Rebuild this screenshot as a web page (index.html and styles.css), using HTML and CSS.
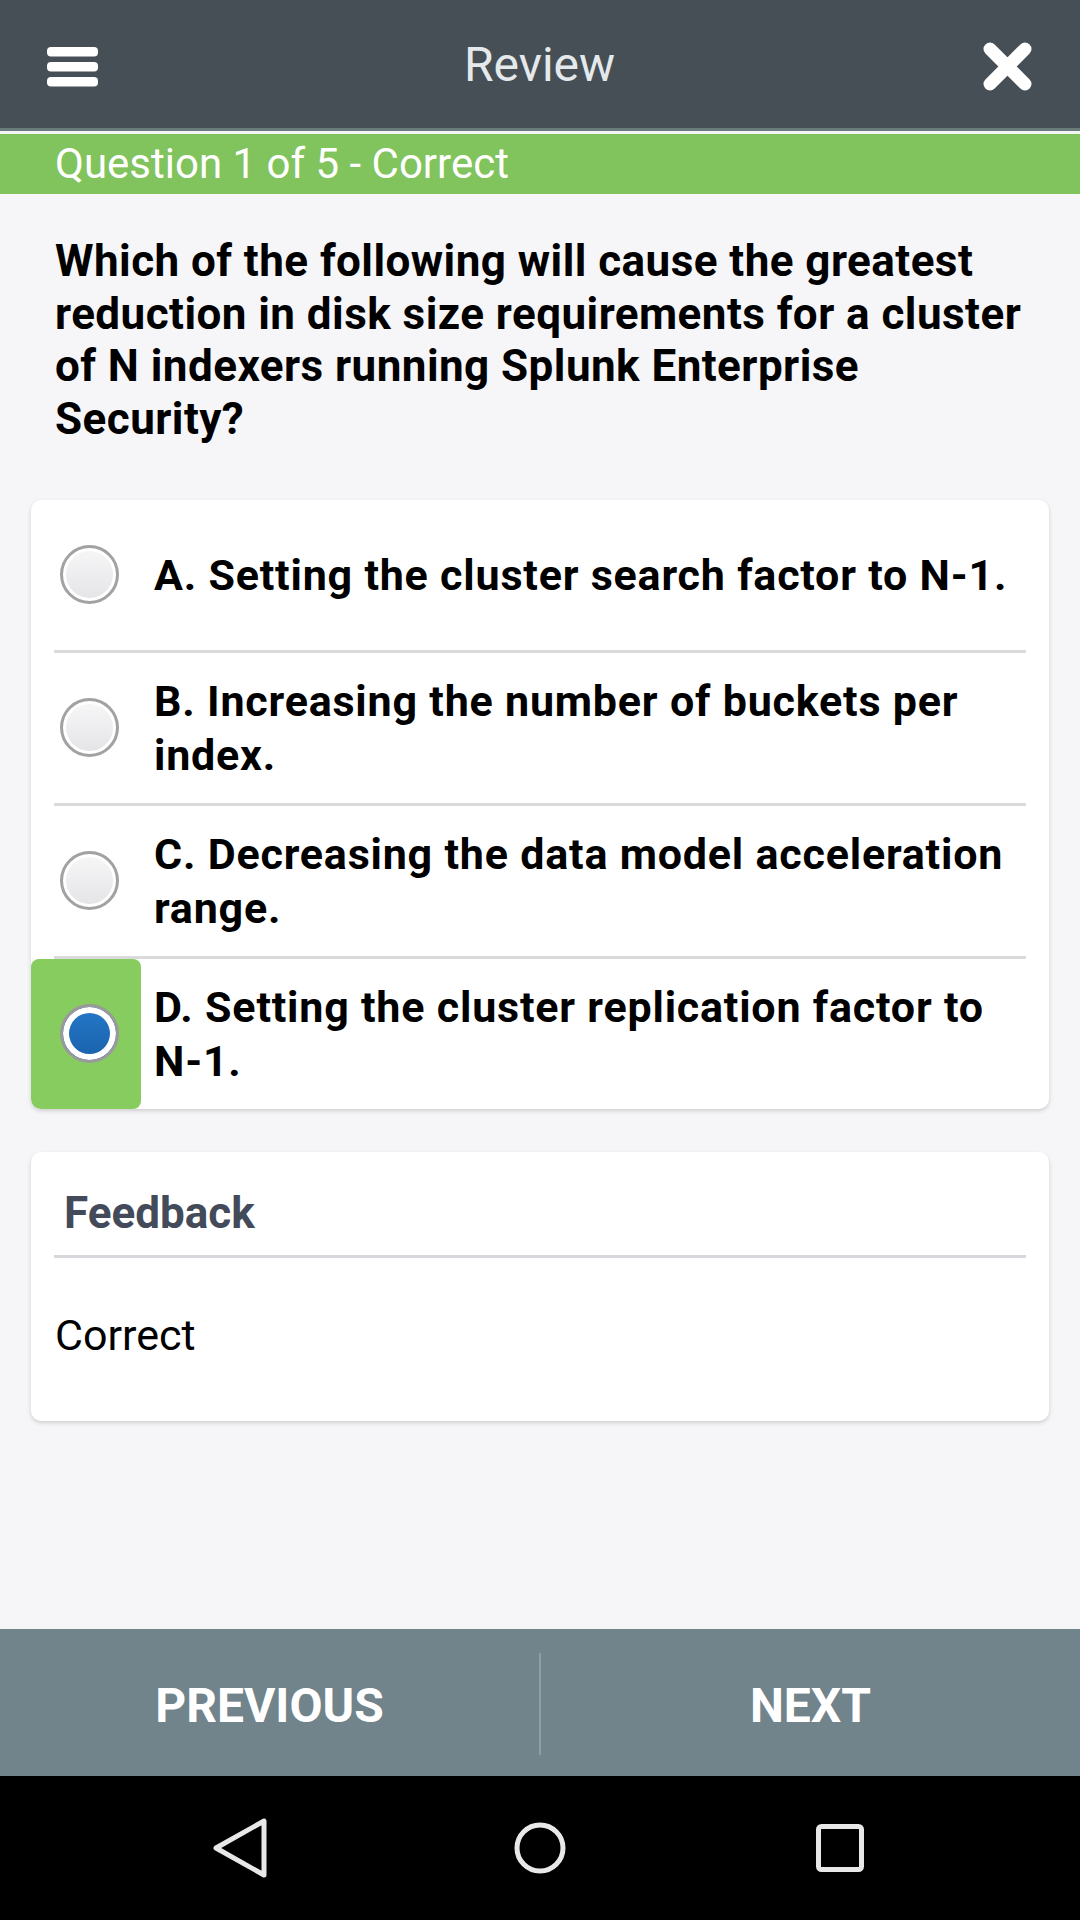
FILE: index.html
```html
<!DOCTYPE html>
<html>
<head>
<meta charset="utf-8">
<link rel="stylesheet" href="styles.css">
</head>
<body>
<header class="topbar">
  <div class="menu-btn">
    <svg width="51" height="40" viewBox="0 0 51 40"><rect x="0" y="0" width="51" height="9.5" rx="4" fill="#fff"/><rect x="0" y="15" width="51" height="9.5" rx="4" fill="#fff"/><rect x="0" y="30" width="51" height="9.5" rx="4" fill="#fff"/></svg>
  </div>
  <div class="title">Review</div>
  <div class="close-btn">
    <svg width="49" height="49" viewBox="0 0 49 49"><path d="M7 7 L42 42 M42 7 L7 42" stroke="#fff" stroke-width="13" stroke-linecap="round"/></svg>
  </div>
</header>
<div class="topline"></div>
<div class="status">Question 1 of 5 - Correct</div>
<main class="content">
  <p class="question">Which of the following will cause the greatest reduction in disk size requirements for a cluster of N indexers running Splunk Enterprise Security?</p>
  <section class="card options">
    <div class="option">
      <div class="radio-cell"><span class="radio"></span></div>
      <div class="option-text"><span>A. Setting the cluster search factor to <span class="nowrap">N-1.</span></span></div>
    </div>
    <div class="sep"></div>
    <div class="option">
      <div class="radio-cell"><span class="radio"></span></div>
      <div class="option-text"><span>B. Increasing the number of buckets per index.</span></div>
    </div>
    <div class="sep"></div>
    <div class="option">
      <div class="radio-cell"><span class="radio"></span></div>
      <div class="option-text"><span>C. Decreasing the data model acceleration range.</span></div>
    </div>
    <div class="sep"></div>
    <div class="option">
      <div class="radio-cell selected-cell"><span class="radio checked"></span></div>
      <div class="option-text"><span>D. Setting the cluster replication factor to <span class="nowrap">N-1.</span></span></div>
    </div>
  </section>
  <section class="card feedback">
    <div class="feedback-head">Feedback</div>
    <div class="feedback-sep"></div>
    <div class="feedback-body">Correct</div>
  </section>
</main>
<nav class="pager">
  <div class="pager-btn">PREVIOUS</div>
  <div class="pager-div"></div>
  <div class="pager-btn">NEXT</div>
</nav>
<div class="sysnav">
  <svg class="sys-icon" width="60" height="60" viewBox="0 0 60 60"><path d="M54 3 L54 57 L6 30 Z" fill="none" stroke="#e8e8e8" stroke-width="5" stroke-linejoin="round"/></svg>
  <svg class="sys-icon" width="60" height="60" viewBox="0 0 60 60"><circle cx="30" cy="30" r="23" fill="none" stroke="#e8e8e8" stroke-width="5"/></svg>
  <svg class="sys-icon" width="60" height="60" viewBox="0 0 60 60"><rect x="8.5" y="8.5" width="43" height="43" rx="3" fill="none" stroke="#e8e8e8" stroke-width="5"/></svg>
</div>
</body>
</html>
```

FILE: styles.css
```css
* { box-sizing: border-box; }
html, body { margin: 0; padding: 0; }
body {
  width: 1080px;
  height: 1920px;
  display: flex;
  flex-direction: column;
  font-family: Roboto, "Liberation Sans", sans-serif;
  background: #f6f6f8;
  overflow: hidden;
}
.topbar {
  height: 128px;
  background: #474f56;
  display: grid;
  grid-template-columns: 1fr auto 1fr;
  align-items: center;
  padding: 0 48px 0 47px;
  flex: none;
}
.menu-btn { display: flex; padding-top: 5px; }
.close-btn { display: flex; justify-content: flex-end; padding-top: 5px; }
.title {
  color: #e5e9eb;
  font-size: 48px;
  font-weight: 400;
}
.topline {
  height: 6px;
  border-top: 3px solid #6a7b7c;
  background: #f4f6f4;
  flex: none;
}
.status {
  height: 60px;
  background: #81c35c;
  color: #ffffff;
  font-size: 42px;
  line-height: 60px;
  padding-left: 55px;
  flex: none;
}
.content {
  flex: 1;
  padding: 41px 31px 0 31px;
}
.question {
  margin: 0 9px 0 24px;
  font-size: 44px;
  line-height: 52.7px;
  font-weight: 700;
  letter-spacing: 0.45px;
  color: #000;
}
.card {
  background: #fff;
  border-radius: 10px;
  box-shadow: 0 2px 4px rgba(0,0,0,0.16);
}
.options {
  margin-top: 54px;
  overflow: hidden;
}
.option {
  display: flex;
  min-height: 150px;
}
.radio-cell {
  width: 110px;
  flex: none;
  display: flex;
  align-items: center;
  padding-left: 29px;
}
.selected-cell {
  background: #86cc5f;
  border-radius: 8px;
}
.radio {
  width: 59px;
  height: 59px;
  border-radius: 50%;
  border: 3px solid #a2a2a2;
  background: linear-gradient(#f7f7f8, #e4e4e7);
  box-shadow: inset 0 0 0 3px #ffffff;
}
.radio.checked {
  border: 3px solid #9a9a9a;
  background: linear-gradient(#2479c8, #1a60ab);
  box-shadow: inset 0 0 0 6px #ffffff;
}
.option-text {
  flex: 1;
  display: flex;
  align-items: center;
  padding: 20px 20px 20px 13px;
  font-size: 43px;
  line-height: 54px;
  font-weight: 700;
  letter-spacing: 0.8px;
  color: #000;
}
.nowrap { white-space: nowrap; }
.sep {
  height: 3px;
  margin: 0 23px;
  background: #dadadd;
}
.feedback {
  margin-top: 43px;
  padding: 35px 23px 60px 23px;
}
.feedback-head {
  padding-left: 10px;
  font-size: 44px;
  line-height: 52px;
  font-weight: 700;
  color: #434b5a;
}
.feedback-sep {
  margin-top: 16px;
  height: 3px;
  background: #d8d8dc;
}
.feedback-body {
  margin-top: 51px;
  padding-left: 1px;
  font-size: 43px;
  line-height: 52px;
  color: #000;
}
.pager {
  height: 147px;
  background: #71838b;
  display: flex;
  align-items: center;
  flex: none;
}
.pager-btn {
  flex: 1;
  text-align: center;
  color: #fff;
  font-size: 48px;
  font-weight: 700;
  padding-top: 6px;
}
.pager-div {
  width: 2px;
  height: 102px;
  background: #8f9ea5;
  margin-top: 2px;
}
.sysnav {
  height: 144px;
  background: #000;
  display: grid;
  grid-template-columns: repeat(3, 300px);
  justify-content: center;
  justify-items: center;
  align-items: center;
  flex: none;
}
.sys-icon { display: block; }
```
